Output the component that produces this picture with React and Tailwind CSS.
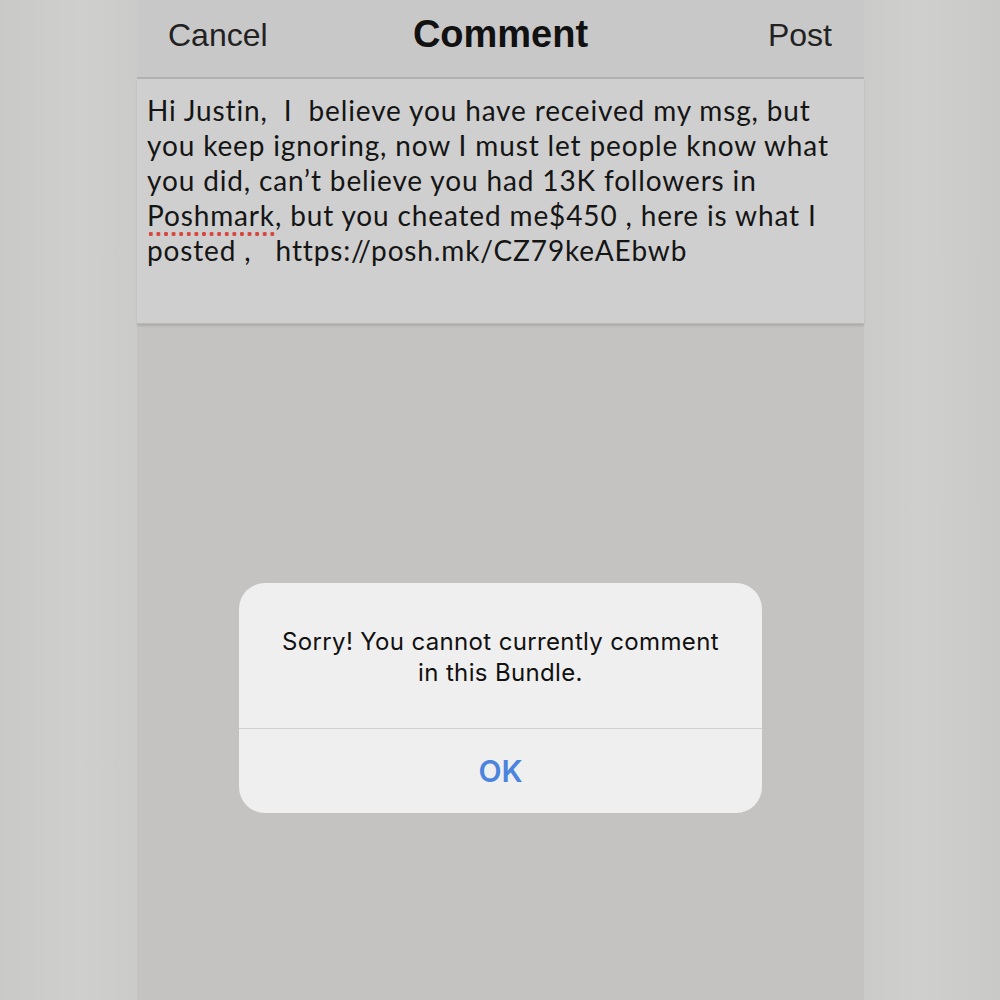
export default function App() {
  const lines = [
    "Hi Justin,  I  believe you have received my msg, but",
    "you keep ignoring, now I must let people know what",
    "you did, can\u2019t believe you had 13K followers in",
  ];
  return (
    <div className="relative w-[1000px] h-[1000px] overflow-hidden flex bg-[linear-gradient(90deg,#c9c9c7_0%,#cfcfcd_8%,#cbcbc9_13.7%,#cbcbc9_86.4%,#cfcfcd_92%,#c9c9c7_100%)]">
      <div className="ml-[137px] w-[727px] h-full flex flex-col bg-[#c4c3c1]">
        {/* header */}
        <div className="h-[79px] shrink-0 bg-[#c9c8c8] border-b-2 border-[#b1b1b1] grid grid-cols-3 px-[31px] text-[#222] font-['Liberation_Sans',Arial,sans-serif] leading-none">
          <div className="text-[32px] mt-[19px]">Cancel</div>
          <div className="text-[38px] font-bold mt-[15px] justify-self-center text-[#111]">Comment</div>
          <div className="text-[32px] mt-[19px] justify-self-end pr-[1px]">Post</div>
        </div>
        {/* text area */}
        <div className="h-[245px] shrink-0 bg-[#cfcfcf] pl-[10px] pt-[14px] text-[28px] leading-[35px] tracking-[0.86px] text-[#151515] font-['Lato','Noto_Sans',sans-serif] shadow-[0_2px_2px_rgba(0,0,0,0.12)] border-b border-[#b9b9b9]">
          {lines.map((l, i) => (
            <div key={i} className="whitespace-pre">{l}</div>
          ))}
          <div className="whitespace-pre">
            <span className="relative">
              Poshmark
              <span className="absolute left-0 right-[-2px] top-[33px] h-[6px] bg-[radial-gradient(circle,#d8443c_1.9px,transparent_2.4px)] bg-[length:7.6px_6px] bg-repeat-x"></span>
            </span>
            {", but you cheated me$450 , here is what I"}
          </div>
          <div className="whitespace-pre">{"posted ,   https://posh.mk/CZ79keAEbwb"}</div>
        </div>
        <div className="flex-1"></div>
      </div>

      {/* alert overlay */}
      <div className="absolute left-[239px] top-[583px] w-[523px] h-[230px] rounded-[26px] bg-[#f0efef] flex flex-col font-['Inter','Noto_Sans',sans-serif]">
        <div className="h-[145px] flex flex-col items-center pt-[43px] text-[24px] leading-[31px] tracking-[0.35px] text-[#111] text-center">
          <div>Sorry! You cannot currently comment</div>
          <div>in this Bundle.</div>
        </div>
        <div className="h-px bg-[#cfcfcf]"></div>
        <div className="flex-1 flex items-center justify-center text-[30px] font-semibold text-[#4a84dc]">
          OK
        </div>
      </div>
    </div>
  );
}
